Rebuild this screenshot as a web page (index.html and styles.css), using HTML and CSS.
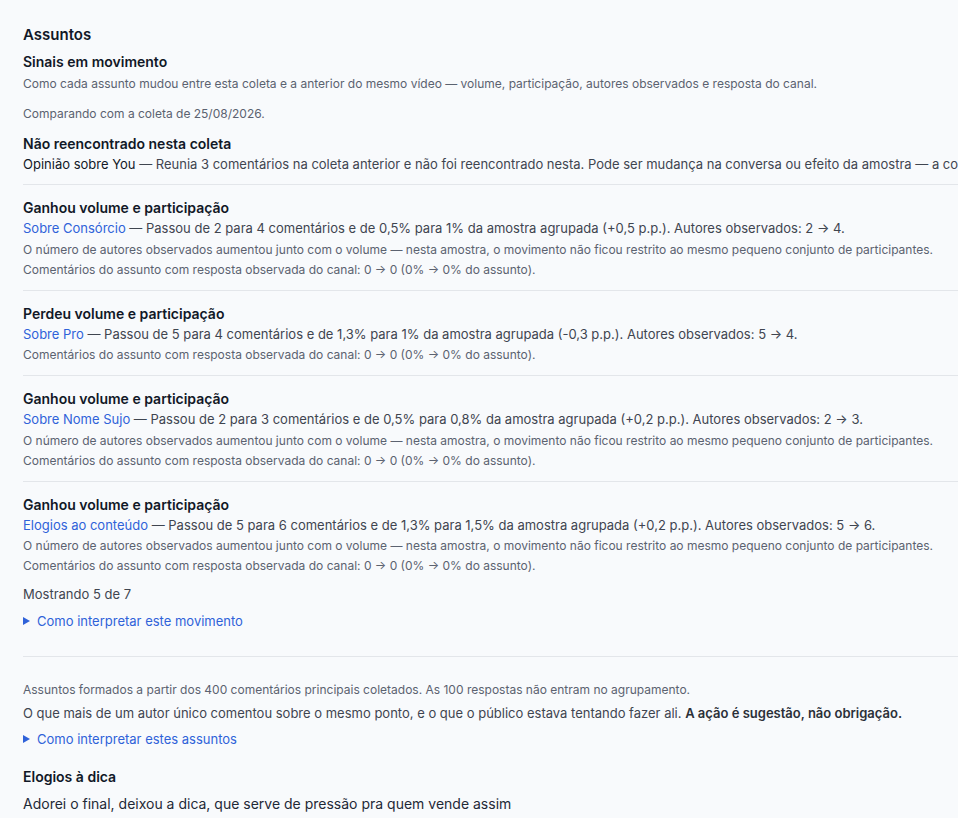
FILE: index.html
```html
<!DOCTYPE html>
<html lang="pt-BR">
<head>
<meta charset="utf-8">
<title>Assuntos</title>
<link rel="stylesheet" href="styles.css">
</head>
<body>
<main class="page">
  <h2 class="title">Assuntos</h2>

  <section class="movement">
    <h3 class="subtitle">Sinais em movimento</h3>
    <p class="muted desc">Como cada assunto mudou entre esta coleta e a anterior do mesmo vídeo — volume, participação, autores observados e resposta do canal.</p>
    <p class="muted compare">Comparando com a coleta de 25/08/2026.</p>

    <div class="item first">
      <h4 class="item-title">Não reencontrado nesta coleta</h4>
      <p class="item-line nowrap"><span class="strong-name">Opinião sobre You</span> — Reunia 3 comentários na coleta anterior e não foi reencontrado nesta. Pode ser mudança na conversa ou efeito da amostra — a comparação não permite saber qual.</p>
    </div>

    <div class="item">
      <h4 class="item-title">Ganhou volume e participação</h4>
      <p class="item-line"><span class="link">Sobre Consórcio</span> — Passou de 2 para 4 comentários e de 0,5% para 1% da amostra agrupada (+0,5 p.p.). Autores observados: 2 → 4.</p>
      <p class="note">O número de autores observados aumentou junto com o volume — nesta amostra, o movimento não ficou restrito ao mesmo pequeno conjunto de participantes.</p>
      <p class="note">Comentários do assunto com resposta observada do canal: 0 → 0 (0% → 0% do assunto).</p>
    </div>

    <div class="item">
      <h4 class="item-title">Perdeu volume e participação</h4>
      <p class="item-line"><span class="link">Sobre Pro</span> — Passou de 5 para 4 comentários e de 1,3% para 1% da amostra agrupada (-0,3 p.p.). Autores observados: 5 → 4.</p>
      <p class="note">Comentários do assunto com resposta observada do canal: 0 → 0 (0% → 0% do assunto).</p>
    </div>

    <div class="item">
      <h4 class="item-title">Ganhou volume e participação</h4>
      <p class="item-line"><span class="link">Sobre Nome Sujo</span> — Passou de 2 para 3 comentários e de 0,5% para 0,8% da amostra agrupada (+0,2 p.p.). Autores observados: 2 → 3.</p>
      <p class="note">O número de autores observados aumentou junto com o volume — nesta amostra, o movimento não ficou restrito ao mesmo pequeno conjunto de participantes.</p>
      <p class="note">Comentários do assunto com resposta observada do canal: 0 → 0 (0% → 0% do assunto).</p>
    </div>

    <div class="item last">
      <h4 class="item-title">Ganhou volume e participação</h4>
      <p class="item-line"><span class="link">Elogios ao conteúdo</span> — Passou de 5 para 6 comentários e de 1,3% para 1,5% da amostra agrupada (+0,2 p.p.). Autores observados: 5 → 6.</p>
      <p class="note">O número de autores observados aumentou junto com o volume — nesta amostra, o movimento não ficou restrito ao mesmo pequeno conjunto de participantes.</p>
      <p class="note">Comentários do assunto com resposta observada do canal: 0 → 0 (0% → 0% do assunto).</p>
    </div>

    <p class="count">Mostrando 5 de 7</p>
    <details class="explain">
      <summary>Como interpretar este movimento</summary>
    </details>
  </section>

  <section class="topics">
    <p class="muted small">Assuntos formados a partir dos 400 comentários principais coletados. As 100 respostas não entram no agrupamento.</p>
    <p class="intro">O que mais de um autor único comentou sobre o mesmo ponto, e o que o público estava tentando fazer ali. <strong>A ação é sugestão, não obrigação.</strong></p>
    <details class="explain topics-explain">
      <summary>Como interpretar estes assuntos</summary>
    </details>

    <div class="topic">
      <h4 class="item-title">Elogios à dica</h4>
      <p class="quote">Adorei o final, deixou a dica, que serve de pressão pra quem vende assim</p>
    </div>
  </section>
</main>
</body>
</html>
```

FILE: styles.css
```css
html, body {
  margin: 0;
  padding: 0;
  background: #f8fafc;
  overflow: hidden;
}

body {
  font-family: Inter, "Noto Sans", sans-serif;
  color: #111827;
}

.page {
  width: 1100px;
  padding: 25px 0 0 23px;
}

p, h2, h3, h4 {
  margin: 0;
}

.title {
  font-size: 15px;
  font-weight: 600;
  line-height: 20px;
  margin-bottom: 7px;
}

.subtitle {
  font-size: 14px;
  font-weight: 600;
  line-height: 20px;
}

.muted {
  font-size: 12px;
  line-height: 18px;
  color: #5b6270;
}

.desc {
  margin-top: 3px;
}

.compare {
  margin-top: 12px;
}

.item {
  border-top: 1px solid #e3e6ea;
  padding: 13px 0 10px;
}

.item.first {
  border-top: none;
  padding-top: 11px;
  padding-bottom: 10px;
}

.item.last {
  padding-bottom: 8px;
}

.item-title {
  font-size: 14px;
  font-weight: 600;
  line-height: 20px;
}

.item-line {
  font-size: 13px;
  line-height: 20px;
  color: #3f4550;
  margin-bottom: 1.5px;
}

.item.first .item-line {
  margin-bottom: 0;
}

.nowrap {
  white-space: nowrap;
}

.strong-name {
  color: #111827;
}

.link {
  color: #2f62d9;
}

.note {
  font-size: 12px;
  line-height: 20px;
  color: #5b6270;
}

.count {
  font-size: 13px;
  line-height: 20px;
  color: #3f4550;
  margin-top: 0;
}

.explain {
  margin-top: 7px;
}

.topics-explain {
  margin-top: 6px;
}

.explain summary {
  display: flex;
  align-items: center;
  list-style: none;
  font-size: 13px;
  line-height: 20px;
  color: #2f62d9;
  cursor: pointer;
}

.explain summary::-webkit-details-marker {
  display: none;
}

.explain summary::before {
  content: "";
  width: 0;
  height: 0;
  border-left: 7px solid #2f62d9;
  border-top: 4.5px solid transparent;
  border-bottom: 4.5px solid transparent;
  margin-right: 7px;
}

.movement {
  padding-bottom: 25px;
  border-bottom: 1px solid #e3e6ea;
  margin-bottom: 24px;
}

.small {
  line-height: 18px;
}

.intro {
  font-size: 13px;
  line-height: 20px;
  color: #3f4550;
  margin-top: 4px;
}

.intro strong {
  color: #2b3038;
  font-weight: 600;
}

.topic {
  margin-top: 18px;
}

.quote {
  font-size: 14px;
  line-height: 20px;
  color: #1f2937;
  margin-top: 7px;
}
```
